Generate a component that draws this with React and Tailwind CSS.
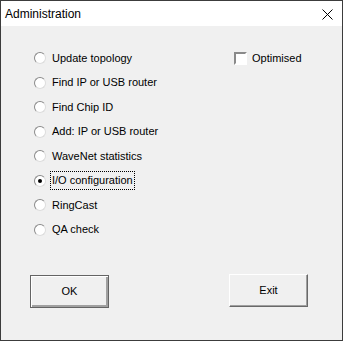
import React, { useState } from 'react';

const options = [
  'Update topology',
  'Find IP or USB router',
  'Find Chip ID',
  'Add: IP or USB router',
  'WaveNet statistics',
  'I/O configuration',
  'RingCast',
  'QA check',
];

const Radio = ({ checked }) => (
  <div className="w-[12px] h-[12px] rounded-full border border-t-[#8a8a8a] border-l-[#8a8a8a] border-b-[#dcdcdc] border-r-[#dcdcdc] bg-white flex items-center justify-center shrink-0">
    {checked && <div className="w-[4px] h-[4px] rounded-full bg-black" />}
  </div>
);

const App = () => {
  const [selected, setSelected] = useState(5);
  const [optimised, setOptimised] = useState(false);

  return (
    <div
      className="w-[343px] h-[341px] border border-[#3c3c3c] flex flex-col bg-[#f0f0f0] text-black"
      style={{ fontFamily: '"Liberation Sans", Arial, sans-serif' }}
    >
      {/* title bar */}
      <div className="h-[25px] bg-white flex items-center justify-between pl-[4px] pr-[9px] shrink-0">
        <span className="text-[12px] leading-none">Administration</span>
        <svg width="11" height="11" viewBox="0 0 11 11" className="mt-[1px]">
          <path d="M0.5 0.5 L10.5 10.5 M10.5 0.5 L0.5 10.5" stroke="#000" strokeWidth="1" />
        </svg>
      </div>

      <div className="flex-1 flex flex-col text-[11px] leading-none">
        <div className="flex pt-[20px]">
          <div className="flex flex-col ml-[33px] w-[200px]">
            {options.map((label, i) => (
              <div
                key={label}
                className="h-[24.5px] flex items-center cursor-default"
                onClick={() => setSelected(i)}
              >
                <Radio checked={selected === i} />
                <span
                  className={
                    selected === i
                      ? 'ml-[4px] px-[1px] py-[3px] border border-dotted border-black'
                      : 'ml-[6px] py-[4px]'
                  }
                >
                  {label}
                </span>
              </div>
            ))}
          </div>
          <div className="h-[24.5px] flex items-center cursor-default" onClick={() => setOptimised(!optimised)}>
            <div className="w-[13px] h-[13px] border-2 border-t-[#8a8a8a] border-l-[#8a8a8a] border-b-white border-r-white bg-white flex items-center justify-center text-[10px]">
              {optimised ? '✓' : ''}
            </div>
            <span className="ml-[5px]">Optimised</span>
          </div>
        </div>

        <div className="flex justify-between pl-[29px] pr-[34px] mt-[33px]">
          <button className="w-[79px] h-[33px] bg-[#f0f0f0] border border-[#646464] shadow-[inset_1px_1px_0_#ffffff,inset_-1px_-1px_0_#a0a0a0,inset_-2px_-2px_0_#a0a0a0] text-[11px]">
            OK
          </button>
          <button className="w-[79px] h-[33px] -mt-[1px] bg-[#f0f0f0] border border-t-white border-l-white border-b-[#696969] border-r-[#696969] shadow-[inset_-1px_-1px_0_#a0a0a0] text-[11px]">
            Exit
          </button>
        </div>
      </div>
    </div>
  );
};

export default App;
